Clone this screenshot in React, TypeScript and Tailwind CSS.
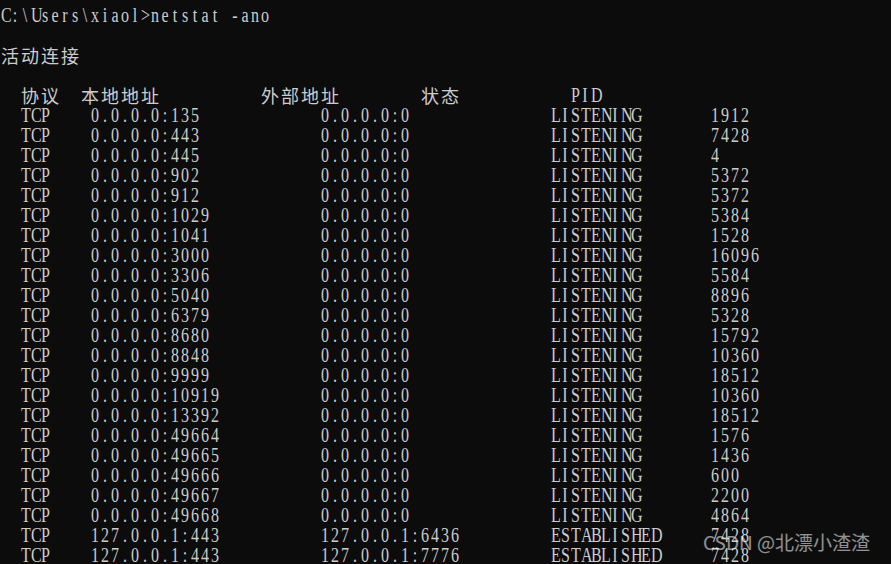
import React from "react";

type Row = [string, string, string, string, string];

const rows: Row[] = [
  ["TCP", "0.0.0.0:135", "0.0.0.0:0", "LISTENING", "1912"],
  ["TCP", "0.0.0.0:443", "0.0.0.0:0", "LISTENING", "7428"],
  ["TCP", "0.0.0.0:445", "0.0.0.0:0", "LISTENING", "4"],
  ["TCP", "0.0.0.0:902", "0.0.0.0:0", "LISTENING", "5372"],
  ["TCP", "0.0.0.0:912", "0.0.0.0:0", "LISTENING", "5372"],
  ["TCP", "0.0.0.0:1029", "0.0.0.0:0", "LISTENING", "5384"],
  ["TCP", "0.0.0.0:1041", "0.0.0.0:0", "LISTENING", "1528"],
  ["TCP", "0.0.0.0:3000", "0.0.0.0:0", "LISTENING", "16096"],
  ["TCP", "0.0.0.0:3306", "0.0.0.0:0", "LISTENING", "5584"],
  ["TCP", "0.0.0.0:5040", "0.0.0.0:0", "LISTENING", "8896"],
  ["TCP", "0.0.0.0:6379", "0.0.0.0:0", "LISTENING", "5328"],
  ["TCP", "0.0.0.0:8680", "0.0.0.0:0", "LISTENING", "15792"],
  ["TCP", "0.0.0.0:8848", "0.0.0.0:0", "LISTENING", "10360"],
  ["TCP", "0.0.0.0:9999", "0.0.0.0:0", "LISTENING", "18512"],
  ["TCP", "0.0.0.0:10919", "0.0.0.0:0", "LISTENING", "10360"],
  ["TCP", "0.0.0.0:13392", "0.0.0.0:0", "LISTENING", "18512"],
  ["TCP", "0.0.0.0:49664", "0.0.0.0:0", "LISTENING", "1576"],
  ["TCP", "0.0.0.0:49665", "0.0.0.0:0", "LISTENING", "1436"],
  ["TCP", "0.0.0.0:49666", "0.0.0.0:0", "LISTENING", "600"],
  ["TCP", "0.0.0.0:49667", "0.0.0.0:0", "LISTENING", "2200"],
  ["TCP", "0.0.0.0:49668", "0.0.0.0:0", "LISTENING", "4864"],
  ["TCP", "127.0.0.1:443", "127.0.0.1:6436", "ESTABLISHED", "7428"],
  ["TCP", "127.0.0.1:443", "127.0.0.1:7776", "ESTABLISHED", "7428"],
];

const fmt = (r: Row) =>
  "  " + r[0].padEnd(7) + r[1].padEnd(23) + r[2].padEnd(23) + r[3].padEnd(16) + r[4];

const lines: string[] = [
  "C:\\Users\\xiaol>netstat -ano",
  "",
  "活动连接",
  "",
  "  协议  本地地址          外部地址        状态           PID",
  ...rows.map(fmt),
];

const isWide = (c: string) => c.charCodeAt(0) > 0x2e80;

function Line({ text }: { text: string }) {
  return (
    <div className="flex h-[20px] leading-[20px] whitespace-pre">
      {Array.from(text).map((c, i) =>
        isWide(c) ? (
          <span
            key={i}
            className="inline-block w-[20px] shrink-0 text-center font-['Noto_Sans_CJK_SC',sans-serif] text-[18px] leading-[20px]"
          >
            {c}
          </span>
        ) : (
          <span
            key={i}
            className="inline-block w-[10px] shrink-0 text-center scale-x-[0.8] font-['Liberation_Serif',serif] text-[20px] leading-[20px]"
          >
            {c === " " ? "\u00a0" : c}
          </span>
        )
      )}
    </div>
  );
}

export default function App() {
  return (
    <div className="relative w-[891px] h-[564px] overflow-hidden bg-[#0c0c0c] text-[#cccccc] pt-[5px]">
      {lines.map((l, i) => (
        <Line key={i} text={l} />
      ))}
      <div className="absolute left-[703px] top-[529px] font-['Noto_Sans_CJK_SC',sans-serif] text-[19px] leading-[26px] text-white/55 whitespace-nowrap">
        CSDN @北漂小渣渣
      </div>
    </div>
  );
}
